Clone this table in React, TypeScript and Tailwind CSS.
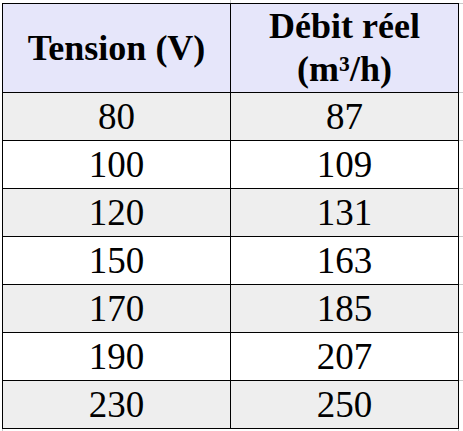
import React from "react";

const rows: [string, string][] = [
  ["80", "87"],
  ["100", "109"],
  ["120", "131"],
  ["150", "163"],
  ["170", "185"],
  ["190", "207"],
  ["230", "250"],
];

const grid = "border-[#c8c8c8]";

export default function App() {
  return (
    <div
      className="w-[463px] h-[431px] bg-white pl-[2px] flex flex-col overflow-hidden"
      style={{ fontFamily: '"Liberation Serif", "Times New Roman", serif' }}
    >
      {/* top gridline strip */}
      <div className={`w-[229px] h-[3px] shrink-0 border-r ${grid}`} />

      <div className="flex">
        <div className="w-[457px] border-l border-t border-black grid grid-cols-2 text-black">
          <div className="h-[89px] bg-[#e6e6fa] border-r border-b border-black flex items-center justify-center font-bold text-[36px] leading-[43px] text-center">
            Tension (V)
          </div>
          <div className="h-[89px] bg-[#e6e6fa] border-r border-b border-black flex items-center justify-center font-bold text-[36px] leading-[43px] text-center">
            <div>
              Débit réel
              <br />
              (m³/h)
            </div>
          </div>
          {rows.map(([a, b], i) => (
            <React.Fragment key={a}>
              <div
                className={`h-[48px] border-r border-b border-black flex items-center justify-center text-[37px] leading-none ${
                  i % 2 === 0 ? "bg-[#eeeeee]" : "bg-white"
                }`}
              >
                {a}
              </div>
              <div
                className={`h-[48px] border-r border-b border-black flex items-center justify-center text-[37px] leading-none ${
                  i % 2 === 0 ? "bg-[#eeeeee]" : "bg-white"
                }`}
              >
                {b}
              </div>
            </React.Fragment>
          ))}
        </div>
        {/* right gridline strip */}
        <div className="w-[4px] flex flex-col">
          <div className={`h-[89px] border-t ${grid}`} />
          {rows.map(([a]) => (
            <div key={a} className={`h-[48px] border-t ${grid}`} />
          ))}
        </div>
      </div>

      {/* bottom gridline strip */}
      <div className={`w-[457px] h-[3px] shrink-0 border-l border-r ${grid}`} />
    </div>
  );
}
